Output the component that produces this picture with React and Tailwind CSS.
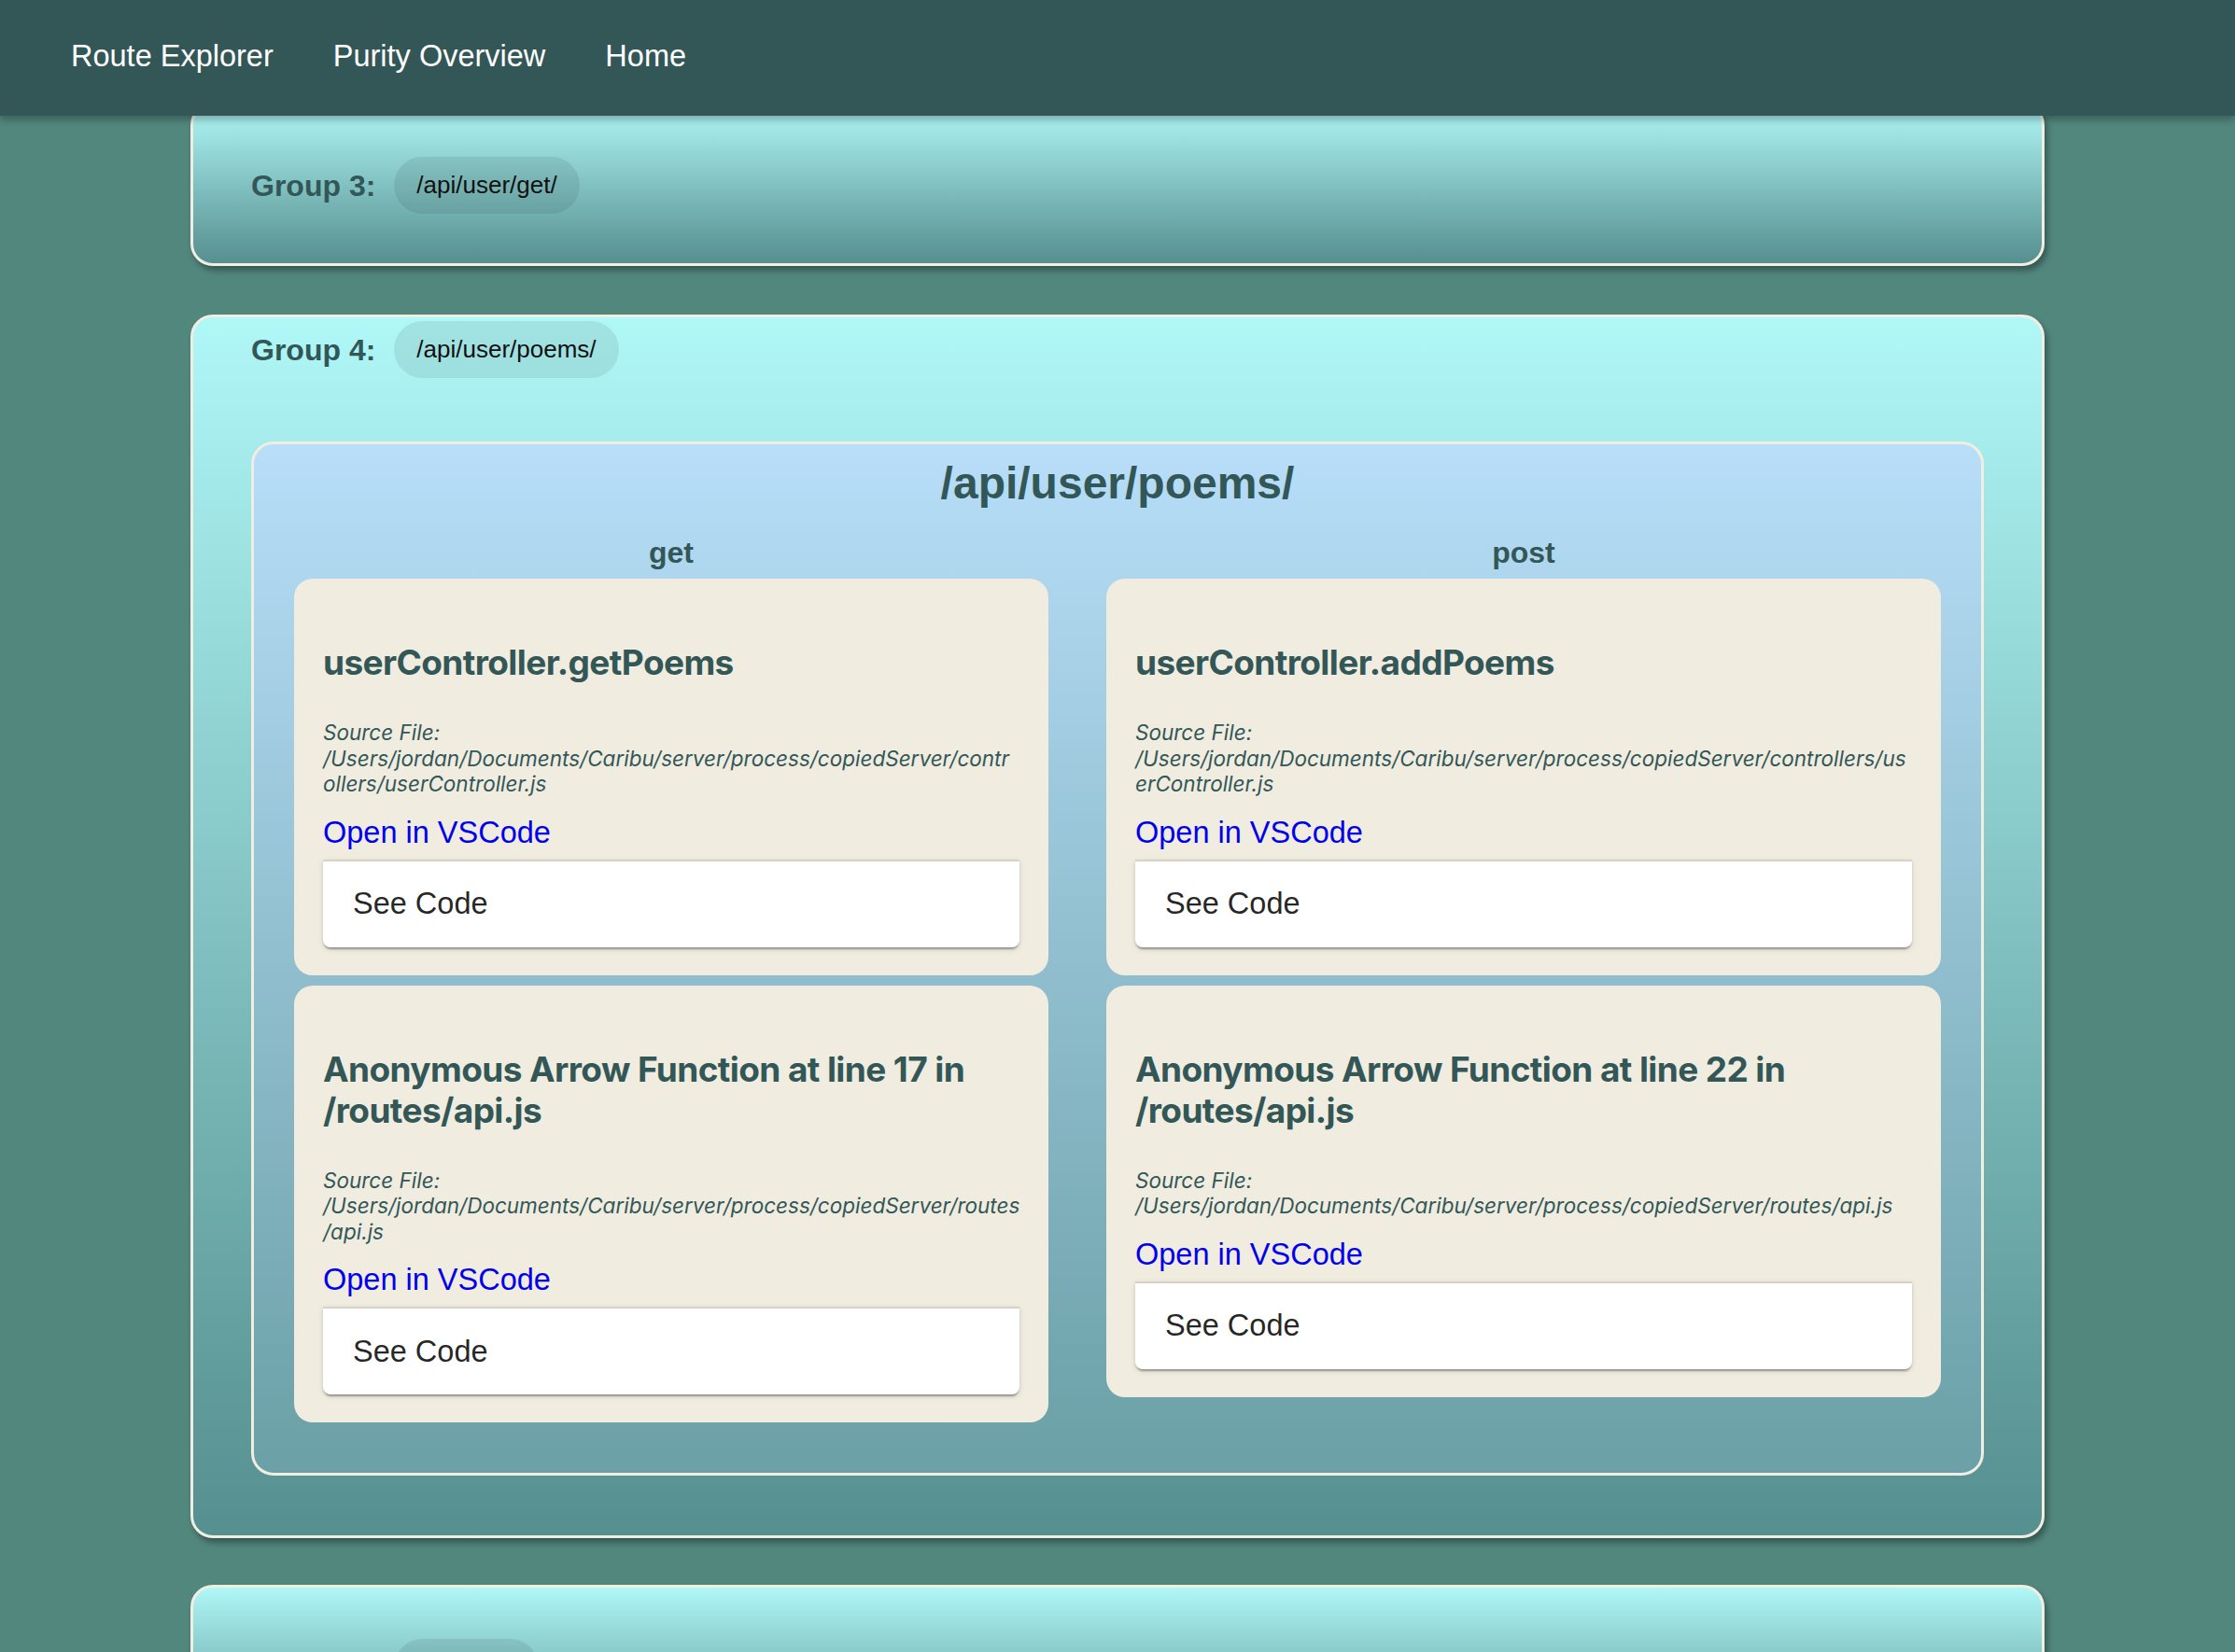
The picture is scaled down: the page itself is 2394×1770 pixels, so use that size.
import React from "react";

const helv = { fontFamily: '"Liberation Sans", Arial, sans-serif' };

function Pill({ children }) {
  return (
    <span className="inline-flex h-[61px] items-center rounded-full bg-black/[0.08] px-[24px] text-[26px] text-[#111]" style={helv}>
      {children}
    </span>
  );
}

function GroupHeader({ n, path }) {
  return (
    <div className="flex items-center gap-[20px]">
      <span className="text-[32px] font-bold text-[#335757]">Group {n}:</span>
      <Pill>{path}</Pill>
    </div>
  );
}

function FnCard({ title, fileLines }) {
  return (
    <div className="rounded-[20px] bg-[#f0ece0] px-[31px] pt-[68px] pb-[30px]">
      <h3
        className="text-[37px] font-bold leading-[44px] tracking-[-0.6px] text-[#335757]"
        style={{ fontFamily: 'Inter, "Noto Sans", sans-serif' }}
      >
        {title}
      </h3>
      <div
        className="mt-[39px] text-[22.5px] italic leading-[27.5px] text-[#335757]"
        style={{ fontFamily: 'Inter, "Noto Sans", sans-serif' }}
      >
        <div>Source File:</div>
        {fileLines.map((l) => (
          <div key={l} className="whitespace-nowrap">{l}</div>
        ))}
      </div>
      <a className="mt-[20px] block text-[32.5px] leading-[37px] text-[#0000ee]" style={helv}>
        Open in VSCode
      </a>
      <div className="mt-[10px] flex h-[94px] items-center rounded-b-[8px] border-t-2 border-[#d6d2c6] bg-white px-[32px] text-[32.5px] text-black/[0.87] shadow-[0_4px_2px_-2px_rgba(0,0,0,0.2),0_2px_2px_0_rgba(0,0,0,0.14),0_2px_6px_0_rgba(0,0,0,0.12)]" style={helv}>
        See Code
      </div>
    </div>
  );
}

const groupCard =
  "rounded-[24px] border-[3px] border-[#f0ede1] bg-gradient-to-b from-[#b0f7f7] to-[#568f8f] shadow-[3px_5px_6px_rgba(0,0,0,0.35)]";

export default function App() {
  return (
    <div className="relative h-[1770px] overflow-hidden bg-[#52877e]" style={helv}>
      <nav className="absolute inset-x-0 top-0 z-10 flex h-[124px] items-center gap-[64px] bg-[#335757] pb-[3px] pl-[76px] text-[32.5px] text-white shadow-[0_4px_8px_rgba(0,0,0,0.3)]">
        <a>Route Explorer</a>
        <a>Purity Overview</a>
        <a>Home</a>
      </nav>

      <main className="mx-auto flex w-[1986px] flex-col pt-[110px]">
        <section className={`${groupCard} px-[62px] pt-[55px] pb-[53px]`}>
          <GroupHeader n={3} path="/api/user/get/" />
        </section>

        <section className={`${groupCard} mt-[52px] px-[62px] pt-[4px] pb-[64px]`}>
          <GroupHeader n={4} path="/api/user/poems/" />
          <div className="mt-[68px] rounded-[24px] border-[3px] border-[#f0ede1] bg-gradient-to-b from-[#b8def9] to-[#6aa0a6] px-[43px] pt-[14px] pb-[54px]">
            <h2 className="text-center text-[48px] font-bold leading-[55px] text-[#335757]">/api/user/poems/</h2>
            <div className="mt-[29px] flex items-start justify-between">
              <div className="flex w-[808px] flex-col">
                <h4 className="text-center text-[32px] font-bold leading-[37px] text-[#335757]">get</h4>
                <div className="mt-[9px] flex flex-col gap-[11px]">
                  <FnCard
                    title="userController.getPoems"
                    fileLines={[
                      "/Users/jordan/Documents/Caribu/server/process/copiedServer/contr",
                      "ollers/userController.js",
                    ]}
                  />
                  <FnCard
                    title="Anonymous Arrow Function at line 17 in /routes/api.js"
                    fileLines={[
                      "/Users/jordan/Documents/Caribu/server/process/copiedServer/routes",
                      "/api.js",
                    ]}
                  />
                </div>
              </div>
              <div className="flex w-[894px] flex-col">
                <h4 className="text-center text-[32px] font-bold leading-[37px] text-[#335757]">post</h4>
                <div className="mt-[9px] flex flex-col gap-[11px]">
                  <FnCard
                    title="userController.addPoems"
                    fileLines={[
                      "/Users/jordan/Documents/Caribu/server/process/copiedServer/controllers/us",
                      "erController.js",
                    ]}
                  />
                  <FnCard
                    title="Anonymous Arrow Function at line 22 in /routes/api.js"
                    fileLines={["/Users/jordan/Documents/Caribu/server/process/copiedServer/routes/api.js"]}
                  />
                </div>
              </div>
            </div>
          </div>
        </section>

        <section className={`${groupCard} mt-[50px] px-[62px] pt-[55px] pb-[53px]`}>
          <GroupHeader n={5} path="/api/user/" />
        </section>
      </main>
    </div>
  );
}
